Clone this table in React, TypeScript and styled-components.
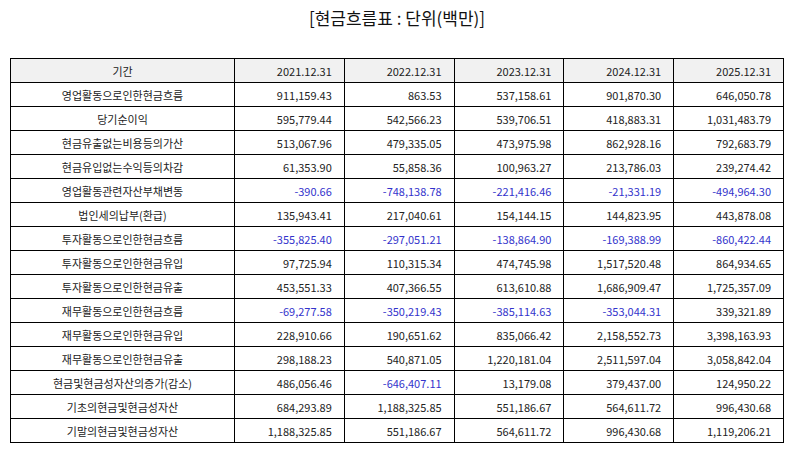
import React from 'react';
import styled, {createGlobalStyle} from "styled-components";

const GlobalStyle = createGlobalStyle`
    body {
        margin: 0;
        background: #ffffff;
        font-family: 'Noto Sans CJK KR', 'Noto Sans', sans-serif;
        color: #222222;
    }
`

const years = ['2021.12.31', '2022.12.31', '2023.12.31', '2024.12.31', '2025.12.31'];

const rows: [string, string[]][] = [
    ['영업활동으로인한현금흐름', ['911,159.43', '863.53', '537,158.61', '901,870.30', '646,050.78']],
    ['당기순이익', ['595,779.44', '542,566.23', '539,706.51', '418,883.31', '1,031,483.79']],
    ['현금유출없는비용등의가산', ['513,067.96', '479,335.05', '473,975.98', '862,928.16', '792,683.79']],
    ['현금유입없는수익등의차감', ['61,353.90', '55,858.36', '100,963.27', '213,786.03', '239,274.42']],
    ['영업활동관련자산부채변동', ['-390.66', '-748,138.78', '-221,416.46', '-21,331.19', '-494,964.30']],
    ['법인세의납부(환급)', ['135,943.41', '217,040.61', '154,144.15', '144,823.95', '443,878.08']],
    ['투자활동으로인한현금흐름', ['-355,825.40', '-297,051.21', '-138,864.90', '-169,388.99', '-860,422.44']],
    ['투자활동으로인한현금유입', ['97,725.94', '110,315.34', '474,745.98', '1,517,520.48', '864,934.65']],
    ['투자활동으로인한현금유출', ['453,551.33', '407,366.55', '613,610.88', '1,686,909.47', '1,725,357.09']],
    ['재무활동으로인한현금흐름', ['-69,277.58', '-350,219.43', '-385,114.63', '-353,044.31', '339,321.89']],
    ['재무활동으로인한현금유입', ['228,910.66', '190,651.62', '835,066.42', '2,158,552.73', '3,398,163.93']],
    ['재무활동으로인한현금유출', ['298,188.23', '540,871.05', '1,220,181.04', '2,511,597.04', '3,058,842.04']],
    ['현금및현금성자산의증가(감소)', ['486,056.46', '-646,407.11', '13,179.08', '379,437.00', '124,950.22']],
    ['기초의현금및현금성자산', ['684,293.89', '1,188,325.85', '551,186.67', '564,611.72', '996,430.68']],
    ['기말의현금및현금성자산', ['1,188,325.85', '551,186.67', '564,611.72', '996,430.68', '1,119,206.21']],
];

export default function App() {
    return (
        <Page>
            <GlobalStyle/>
            <Title>[현금흐름표 : 단위(백만)]</Title>
            <Table>
                <colgroup>
                    <col style={{width: 224}}/>
                    {years.map(y => <col key={y}/>)}
                </colgroup>
                <thead>
                    <tr>
                        <HeadCell>기간</HeadCell>
                        {years.map(y => <HeadCell key={y} $right>{y}</HeadCell>)}
                    </tr>
                </thead>
                <tbody>
                    {rows.map(([label, values]) => (
                        <tr key={label}>
                            <LabelCell>{label}</LabelCell>
                            {values.map((v, i) => (
                                <NumCell key={i} $negative={v.startsWith('-')}>{v}</NumCell>
                            ))}
                        </tr>
                    ))}
                </tbody>
            </Table>
        </Page>
    );
}

const Page = styled.div`
    width: 794px;
    padding: 5px 10px 0;
    box-sizing: border-box;
`

const Title = styled.h1`
    margin: 0 0 27px;
    text-align: center;
    font-size: 17px;
    font-weight: 400;
    line-height: 26px;
    color: #111111;
`

const Table = styled.table`
    width: 774px;
    border-collapse: separate;
    border-spacing: 0;
    table-layout: fixed;
    border-top: 1px solid #000000;
    border-left: 1px solid #000000;
`

const Cell = styled.td`
    height: 24px;
    padding: 0 12px;
    border-right: 1px solid #000000;
    border-bottom: 1px solid #000000;
    font-size: 11px;
    line-height: 14px;
    box-sizing: border-box;
    white-space: nowrap;
`

const HeadCell = styled(Cell).attrs({as: 'th'})<{ $right?: boolean }>`
    background: #f1f1f1;
    font-weight: 400;
    text-align: ${p => p.$right ? 'right' : 'center'};
`

const LabelCell = styled(Cell)`
    text-align: center;
`

const NumCell = styled(Cell)<{ $negative?: boolean }>`
    text-align: right;
    color: ${p => p.$negative ? '#3333cc' : '#222222'};
`
